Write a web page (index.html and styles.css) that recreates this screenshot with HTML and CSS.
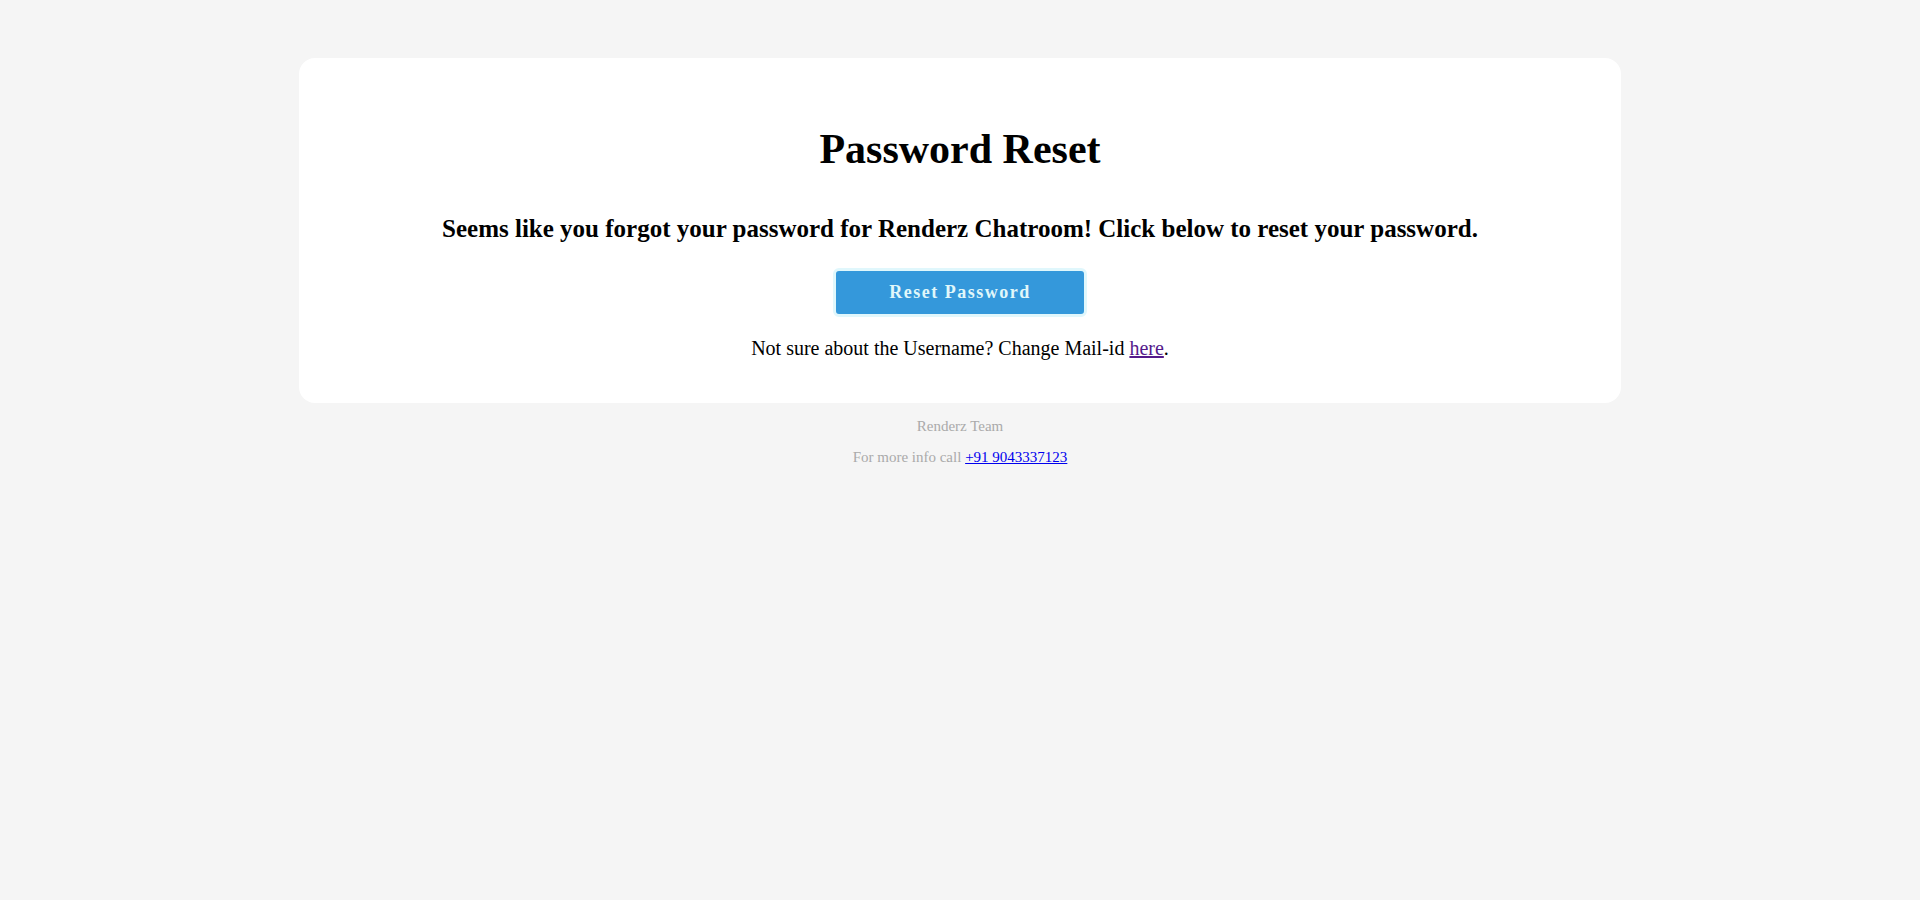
FILE: index.html
```html
<!DOCTYPE html>
<html lang="en">
<head>
<meta charset="utf-8">
<title>Password Reset</title>
<link rel="stylesheet" href="styles.css">
</head>
<body>
<div class="page">
  <div class="card">
    <h1 class="title">Password Reset</h1>
    <h2 class="subtitle">Seems like you forgot your password for Renderz Chatroom! Click below to reset your password.</h2>
    <a class="btn" href="#">Reset Password</a>
    <p class="note">Not sure about the Username? Change Mail-id <a class="visited" href="#">here</a>.</p>
  </div>
  <div class="footer">
    <p class="footer-line">Renderz Team</p>
    <p class="footer-line">For more info call <a class="phone" href="#">+91 9043337123</a></p>
  </div>
</div>
</body>
</html>
```

FILE: styles.css
```css
html, body {
  margin: 0;
  padding: 0;
  background: #f5f5f5;
  font-family: "Liberation Serif", "Times New Roman", serif;
  color: #000;
}

.page {
  padding-top: 58px;
}

.card {
  width: 1322px;
  margin: 0 auto;
  background: #ffffff;
  border-radius: 16px;
  box-sizing: border-box;
  padding: 66px 20px 44px;
  display: flex;
  flex-direction: column;
  align-items: center;
  text-align: center;
}

.title {
  font-size: 42px;
  font-weight: bold;
  margin: 0;
  line-height: 50px;
}

.subtitle {
  font-size: 25px;
  font-weight: bold;
  margin: 41px 0 0;
  line-height: 28px;
}

.btn {
  display: flex;
  align-items: center;
  justify-content: center;
  margin-top: 25px;
  width: 254px;
  height: 49px;
  box-sizing: border-box;
  border: 3px solid #e0f7fc;
  border-radius: 6px;
  background: #3498db;
  color: #e0f7fa;
  font-weight: bold;
  font-size: 18px;
  letter-spacing: 1.5px;
  text-decoration: none;
}

.note {
  font-size: 20px;
  margin: 20px 0 0;
  line-height: 22px;
}

.visited {
  color: #551a8b;
}

.footer {
  text-align: center;
  color: #aaaaaa;
  font-size: 15px;
  padding-top: 15px;
}

.footer-line {
  margin: 0 0 14px;
  line-height: 17px;
}

.phone {
  color: #0000ee;
}
```
